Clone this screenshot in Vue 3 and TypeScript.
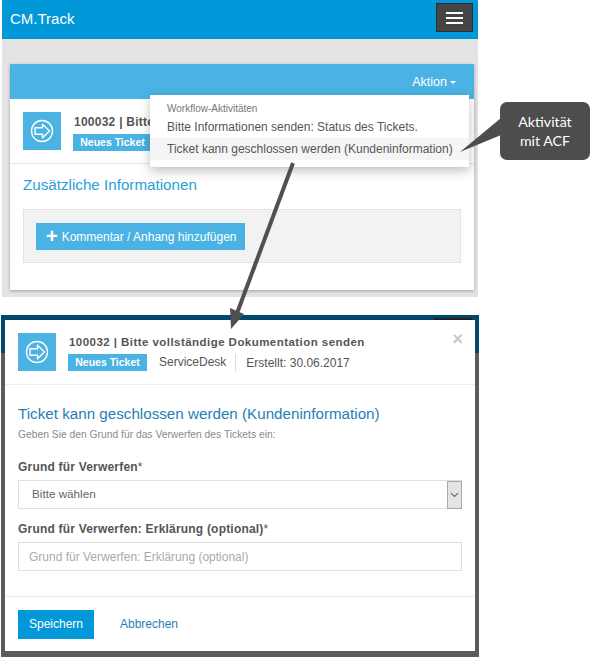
<script setup lang="ts">
const hamburgerBars = [0, 1, 2]
</script>

<template>
  <div class="page">
    <!-- oberer Screenshot -->
    <section class="shot-top">
      <header class="navbar">
        <span class="brand">CM.Track</span>
        <button class="burger" type="button" aria-label="Menü">
          <span v-for="bar in hamburgerBars" :key="bar" class="burger-bar"></span>
        </button>
      </header>
      <div class="panel">
        <div class="panel-head">
          <span class="action">Aktion<i class="caret"></i></span>
        </div>
        <div class="ticket-row">
          <div class="ticket-icon">
            <svg viewBox="0 0 38 38" width="38" height="38">
              <circle cx="19" cy="19" r="10.5" fill="none" stroke="#fff" stroke-width="1.4" />
              <path d="M12 15.8h7.5v-3.6l7 6.8-7 6.8v-3.6H12z" fill="none" stroke="#fff" stroke-width="1.4" stroke-linejoin="round" />
            </svg>
          </div>
          <div>
            <div class="ticket-title">100032 | Bitte</div>
            <span class="tag">Neues Ticket</span>
          </div>
        </div>
        <div class="panel-body">
          <h2 class="info-title">Zusätzliche Informationen</h2>
          <div class="well">
            <button class="add-btn" type="button"><b class="plus">+</b>Kommentar / Anhang hinzufügen</button>
          </div>
        </div>
      </div>
      <div class="dropdown">
        <div class="dropdown-head">Workflow-Aktivitäten</div>
        <div class="dropdown-item">Bitte Informationen senden: Status des Tickets.</div>
        <div class="dropdown-item active">Ticket kann geschlossen werden (Kundeninformation)</div>
      </div>
    </section>

    <!-- unterer Screenshot -->
    <section class="shot-bottom">
      <div class="modal">
        <div class="modal-head">
          <div class="ticket-icon">
            <svg viewBox="0 0 38 38" width="38" height="38">
              <circle cx="19" cy="19" r="10.5" fill="none" stroke="#fff" stroke-width="1.4" />
              <path d="M12 15.8h7.5v-3.6l7 6.8-7 6.8v-3.6H12z" fill="none" stroke="#fff" stroke-width="1.4" stroke-linejoin="round" />
            </svg>
          </div>
          <div class="modal-head-text">
            <div class="modal-ticket">100032 | Bitte vollständige Dokumentation senden</div>
            <div class="modal-meta">
              <span class="tag">Neues Ticket</span>
              <span class="meta-source">ServiceDesk</span>
              <span class="meta-date">Erstellt: 30.06.2017</span>
            </div>
          </div>
          <span class="close">×</span>
        </div>
        <div class="modal-body">
          <h2 class="modal-title">Ticket kann geschlossen werden (Kundeninformation)</h2>
          <p class="hint">Geben Sie den Grund für das Verwerfen des Tickets ein:</p>
          <label class="field-label">Grund für Verwerfen<em>*</em></label>
          <div class="select">
            <span>Bitte wählen</span>
            <span class="select-arrow">
              <svg viewBox="0 0 10 6" width="9" height="6">
                <path d="M1 1l4 3.6L9 1" fill="none" stroke="#666" stroke-width="1.2" />
              </svg>
            </span>
          </div>
          <label class="field-label second">Grund für Verwerfen: Erklärung (optional)<em>*</em></label>
          <input class="text-input" type="text" placeholder="Grund für Verwerfen: Erklärung (optional)" />
        </div>
        <div class="modal-foot">
          <button class="save" type="button">Speichern</button>
          <a class="cancel">Abbrechen</a>
        </div>
      </div>
    </section>

    <!-- Anmerkungen über dem Bild -->
    <svg class="annotation" viewBox="0 0 600 662" width="600" height="662">
      <path d="M293 163L236 316" fill="none" stroke="#505050" stroke-width="4" />
      <path d="M231 329L230 308 244 314z" fill="#505050" />
      <path d="M501 118L460 152 501 135z" fill="#4d4d4d" />
    </svg>
    <div class="callout">Aktivität<br />mit ACF</div>
  </div>
</template>

<style>
html,
body {
  margin: 0;
  background: #fff;
}
</style>

<style scoped>
.page {
  position: relative;
  width: 600px;
  height: 662px;
  overflow: hidden;
  background: #fff;
  font-family: "Liberation Sans", Arial, sans-serif;
  color: #555;
}

.shot-top {
  position: relative;
  width: 476px;
  height: 297px;
  margin-left: 2px;
  background: #e3e3e3;
}

.navbar {
  display: flex;
  align-items: center;
  justify-content: space-between;
  height: 39px;
  padding: 0 5px 2px 8px;
  background: #0098d8;
  border-bottom: 1px solid #0b8bc3;
  box-sizing: border-box;
}

.brand {
  color: #fff;
  font-size: 15px;
}

.burger {
  display: flex;
  flex-direction: column;
  justify-content: center;
  gap: 3px;
  width: 37px;
  height: 29px;
  margin-top: -1px;
  padding: 0 9px;
  background: #454545;
  border: 1px solid #2f2f2f;
  box-sizing: border-box;
}

.burger-bar {
  display: block;
  height: 2px;
  background: #fff;
}

.panel {
  position: absolute;
  left: 8px;
  top: 64px;
  width: 464px;
  height: 226px;
  background: #fff;
  box-shadow: 0 1px 3px rgba(0, 0, 0, 0.3);
}

.panel-head {
  display: flex;
  align-items: center;
  justify-content: flex-end;
  height: 35px;
  padding-right: 18px;
  background: #4ab3e3;
  box-sizing: border-box;
}

.action {
  color: #fff;
  font-size: 12.5px;
}

.caret {
  display: inline-block;
  margin-left: 3px;
  vertical-align: middle;
  border-top: 3px solid #fff;
  border-left: 3.5px solid transparent;
  border-right: 3.5px solid transparent;
}

.ticket-row {
  display: flex;
  gap: 12px;
  height: 65px;
  padding: 13px 13px 0;
  border-bottom: 1px solid #e6e6e6;
  box-sizing: border-box;
}

.ticket-icon {
  flex: none;
  width: 38px;
  height: 38px;
  background: #4ab3e3;
}

.ticket-title {
  margin-top: 3px;
  padding-left: 1px;
  color: #555;
  font-size: 12px;
  font-weight: 700;
  letter-spacing: 0.25px;
  line-height: 14px;
}

.tag {
  display: inline-block;
  width: 79px;
  height: 17px;
  margin-top: 5px;
  background: #4ab3e3;
  color: #fff;
  font-size: 10.5px;
  font-weight: 700;
  line-height: 17px;
  text-align: center;
}

.panel-body {
  padding: 0 13px;
}

.info-title {
  margin: 12px 0 15px;
  color: #2a9fd8;
  font-size: 15.2px;
  font-weight: 400;
  line-height: 18px;
}

.well {
  height: 54px;
  padding: 13px 12px;
  background: #f2f2f2;
  border: 1px solid #e3e3e3;
  box-sizing: border-box;
}

.add-btn {
  display: flex;
  align-items: center;
  width: 209px;
  height: 27px;
  padding: 0 0 0 10px;
  background: #4ab3e3;
  border: 0;
  color: #fff;
  font-family: inherit;
  font-size: 12px;
}

.plus {
  margin-right: 4px;
  font-size: 20px;
  line-height: 17px;
}

.dropdown {
  position: absolute;
  left: 148px;
  top: 95px;
  width: 319px;
  height: 72px;
  padding-top: 7px;
  background: #fff;
  box-shadow: 0 4px 10px rgba(0, 0, 0, 0.25);
  box-sizing: border-box;
}

.dropdown-head {
  padding-left: 17px;
  color: #777;
  font-size: 10px;
  line-height: 14px;
}

.dropdown-item {
  height: 22px;
  padding-left: 17px;
  color: #555;
  font-size: 12px;
  line-height: 22px;
  white-space: nowrap;
}

.dropdown-item.active {
  background: #f5f5f5;
}

.shot-bottom {
  position: relative;
  width: 470px;
  height: 331px;
  margin: 18px 0 0 1px;
  padding: 5px 4px 6px;
  background: linear-gradient(#00486c 38px, #5c5c5c 38px);
}

.shot-bottom::before {
  content: "";
  position: absolute;
  left: 433px;
  top: 3px;
  width: 38px;
  height: 2px;
  background: #222;
}

.modal {
  position: relative;
  display: flex;
  flex-direction: column;
  width: 470px;
  height: 331px;
  background: #fff;
}

.modal-head {
  position: relative;
  display: flex;
  gap: 12px;
  height: 65px;
  padding: 13px 13px 0;
  border-bottom: 1px solid #eee;
  box-sizing: border-box;
}

.modal-ticket {
  margin-top: 2px;
  padding-left: 1px;
  color: #555;
  font-size: 11.5px;
  font-weight: 700;
  letter-spacing: 0.45px;
  line-height: 14px;
}

.modal-meta {
  display: flex;
  align-items: center;
  font-size: 12px;
}

.meta-source {
  margin-left: 12px;
  padding-right: 9px;
  border-right: 1px solid #ddd;
  margin-top: 5px;
  line-height: 17px;
}

.meta-date {
  margin-left: 10px;
  margin-top: 5px;
}

.close {
  position: absolute;
  right: 12px;
  top: 10px;
  color: #c8c8c8;
  font-size: 18px;
  font-weight: 700;
  line-height: 18px;
}

.modal-body {
  flex: 1;
  padding: 0 13px;
}

.modal-title {
  margin: 19px 0 0;
  color: #1f7fb5;
  font-size: 15.2px;
  font-weight: 400;
  line-height: 20px;
}

.hint {
  margin: 4px 0 0;
  color: #8a8a8a;
  font-size: 10.3px;
  line-height: 14px;
}

.field-label {
  display: block;
  margin: 18px 0 6px;
  color: #555;
  font-size: 12px;
  font-weight: 700;
  letter-spacing: 0.2px;
  line-height: 14px;
}

.field-label.second {
  margin-top: 13px;
}

.field-label em {
  font-style: normal;
  font-weight: 400;
}

.select {
  display: flex;
  align-items: center;
  justify-content: space-between;
  width: 444px;
  height: 29px;
  padding-left: 13px;
  border: 1px solid #e0e0e0;
  border-right: 0;
  color: #666;
  font-size: 11.7px;
  line-height: 13px;
  box-sizing: border-box;
}

.select > span:first-child {
  margin-bottom: 2px;
}

.select-arrow {
  display: flex;
  align-items: center;
  justify-content: center;
  width: 15px;
  height: 28px;
  background: #e4e4e4;
  border: 1px solid #a8a8a8;
  box-sizing: border-box;
}

.text-input {
  display: block;
  width: 444px;
  height: 29px;
  margin: 0;
  padding: 0 10px;
  background: #fff;
  border: 1px solid #e0e0e0;
  outline: none;
  font-family: inherit;
  font-size: 12px;
  box-sizing: border-box;
}

.text-input::placeholder {
  color: #aaa;
  opacity: 1;
}

.modal-foot {
  display: flex;
  align-items: center;
  gap: 26px;
  height: 55px;
  padding: 0 13px;
  border-top: 1px solid #e8e8e8;
  box-sizing: border-box;
}

.save {
  width: 76px;
  height: 29px;
  padding: 0;
  background: #0098d8;
  border: 0;
  color: #fff;
  font-family: inherit;
  font-size: 12px;
}

.cancel {
  color: #1f7fb5;
  font-size: 12px;
}

.annotation {
  position: absolute;
  left: 0;
  top: 0;
  pointer-events: none;
}

.callout {
  position: absolute;
  left: 500px;
  top: 102px;
  width: 90px;
  height: 58px;
  padding-top: 10px;
  background: #4d4d4d;
  border-radius: 7px;
  box-sizing: border-box;
  color: #fff;
  font-family: Lato, sans-serif;
  font-size: 14.2px;
  line-height: 19px;
  text-align: center;
}
</style>
